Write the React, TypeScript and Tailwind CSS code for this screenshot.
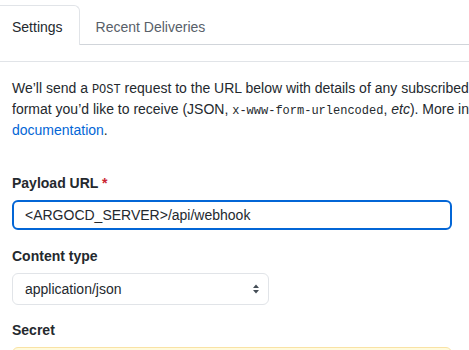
export default function App() {
  const font = { fontFamily: '"Liberation Sans", Arial, sans-serif' }
  return (
    <div
      className="w-[469px] h-[350px] overflow-hidden bg-white text-[14px] leading-[21px] text-[#24292e] font-['Liberation_Sans',Arial,sans-serif]"
      style={font}
    >
      {/* tabs */}
      <div className="pt-[5px] flex border-b border-[#d1d5da] w-[469px]">
        <div className="pl-[12px] pr-4 pt-[11px] pb-[6px] border-t border-r border-[#e1e4e8] rounded-tr-[6px] bg-white -mb-px h-[40px]">
          Settings
        </div>
        <div className="px-4 pt-[12px] pb-[6px] text-[#586069]">Recent Deliveries</div>
      </div>

      <div className="mt-4 border-t border-[#e1e4e8] w-[469px] pt-[16px] pl-[12px]">
        <div className="whitespace-nowrap">
          We’ll send a <code className="font-['Liberation_Mono',monospace] text-[12px] leading-none">POST</code> request to the URL below with details of any subscribed events. You can also specify which data
        </div>
        <div className="whitespace-nowrap">
          format you’d like to receive (JSON, <code className="font-['Liberation_Mono',monospace] text-[12px] leading-none">x-www-form-urlencoded</code>, <em>etc</em>). More information can be found in our developer
        </div>
        <div className="whitespace-nowrap">
          <a className="text-[#0366d6]">documentation</a>.
        </div>

        <div className="mt-[32px] font-bold">
          Payload URL <span className="text-[#cb2431]">*</span>
        </div>
        <div className="mt-[6px] w-[440px] h-[30px] border-2 border-[#0366d6] rounded-[6px] pl-[11px] flex items-center">
          &lt;ARGOCD_SERVER&gt;/api/webhook
        </div>

        <div className="mt-[16px] font-bold">Content type</div>
        <div className="mt-[6px] w-[257px] h-[32px] border border-[#e1e4e8] rounded-[6px] pl-[12px] pr-[8px] flex items-center justify-between">
          <span>application/json</span>
          <svg width="8" height="12" viewBox="0 0 8 12">
            <path d="M4 1.5 L7 5 H1 Z" fill="#444d56" />
            <path d="M4 10.5 L7 7 H1 Z" fill="#444d56" />
          </svg>
        </div>

        <div className="mt-[15px] font-bold">Secret</div>
        <div className="mt-[6px] w-[440px] h-[30px] border border-[#f9e2a5] bg-[#fffbdd] rounded-[6px]" />
      </div>
    </div>
  )
}
